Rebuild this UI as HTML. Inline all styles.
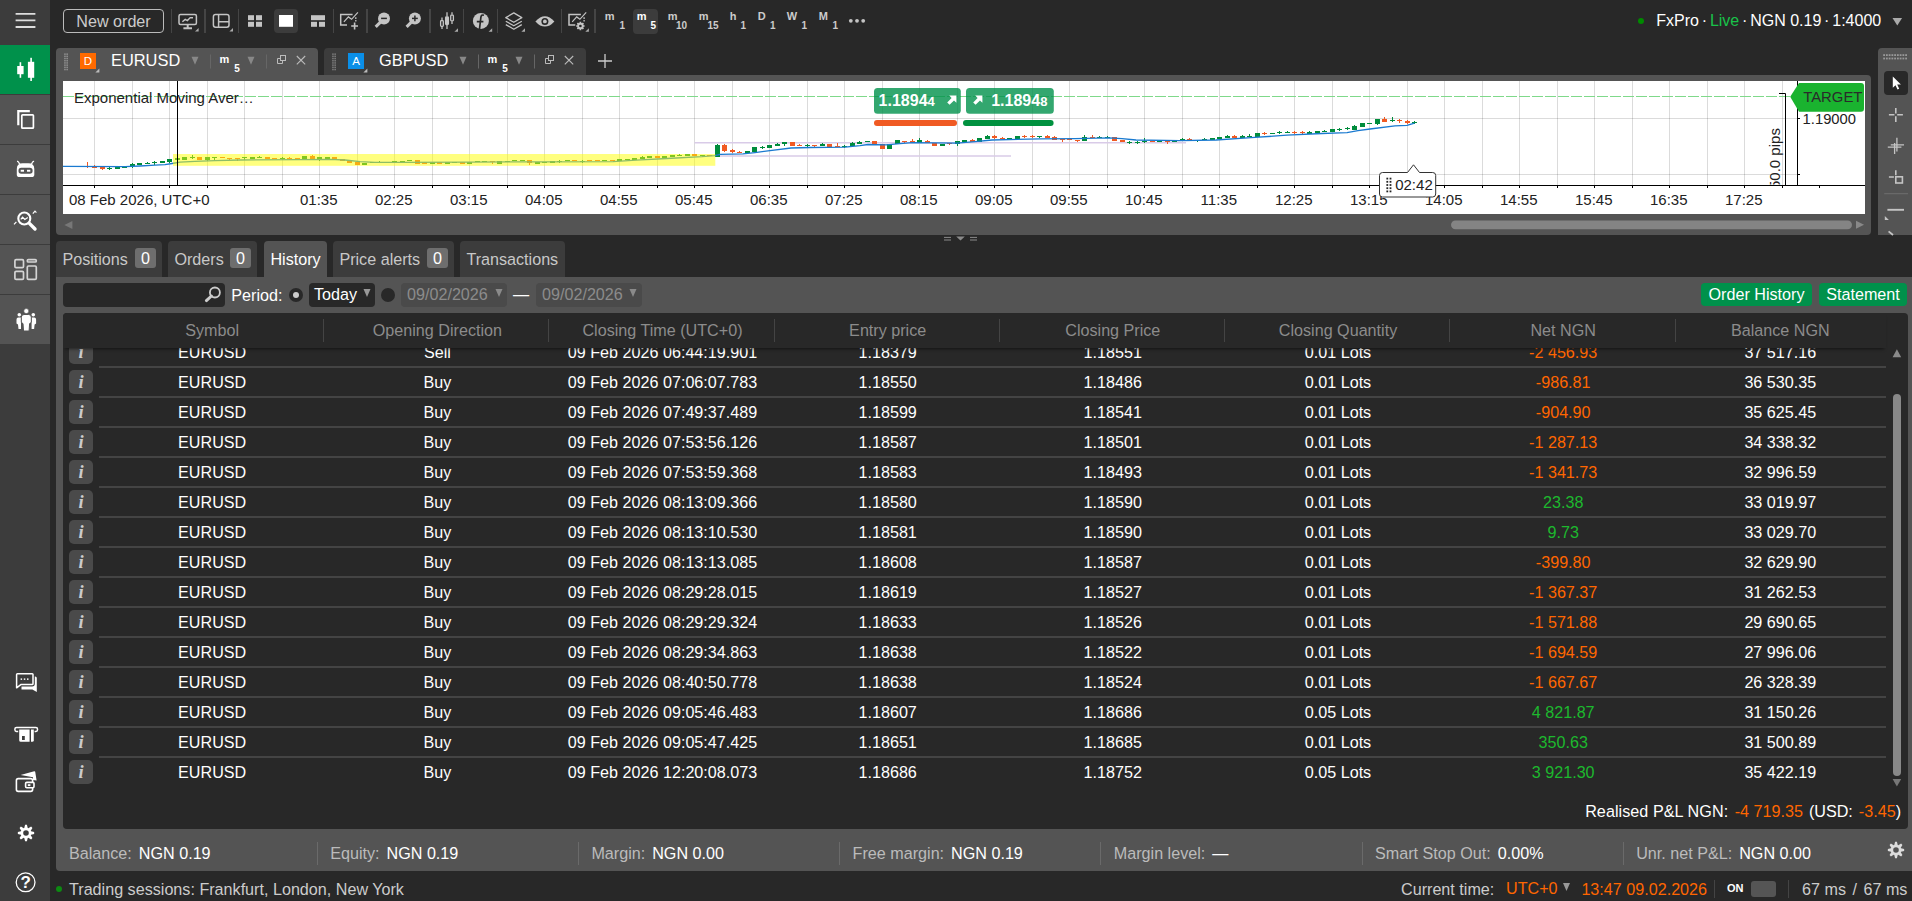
<!DOCTYPE html>
<html><head><meta charset="utf-8"><title>cTrader</title>
<style>
html,body{margin:0;padding:0}
body{width:1912px;height:901px;background:#282828;position:relative;overflow:hidden;font-family:"Liberation Sans",sans-serif;font-size:16.15px;color:#fff;line-height:1}
.abs{position:absolute}
div,span{box-sizing:border-box}
svg{display:block;overflow:visible}
.sb{position:absolute;left:0;width:50px;height:49px;background:#545454}
.vd{position:absolute;width:1px;background:#484848}
.tf{position:absolute;font-weight:bold;font-size:11px;color:#ccc}
.tab{position:absolute;top:241px;height:36px;background:#3c3c3c;border-radius:4px 4px 0 0;color:#c8c8c8;padding:10px 0 0 6.4px;white-space:nowrap}
.badge{position:absolute;top:7px;width:21px;height:20px;border-radius:3px;background:#6e6e6e;color:#fff;text-align:center;padding-top:2px}
.th{position:absolute;top:0;height:35px;color:#8c8c8c;text-align:center;padding-top:9px;white-space:nowrap}
.hd{position:absolute;top:6px;width:1px;height:23px;background:#444}
.row{position:absolute;left:0;width:1823px;height:30px}
.row .sep{position:absolute;left:36px;right:0;bottom:0;height:2px;background:#444}
.row .ib{position:absolute;left:6px;top:2px;width:24px;height:24px;border-radius:5px;background:#4a4a4a;color:#ccc;font-family:"Liberation Serif",serif;font-style:italic;font-weight:bold;font-size:18.5px;text-align:center;padding-top:3px}
.c{position:absolute;top:6px;text-align:center;white-space:nowrap}
.neg{color:#ff6600}.pos{color:#1db82e}
.st{position:absolute;top:0;height:30px;white-space:nowrap;padding-top:7px;color:#bbb}
.st b{font-weight:normal;color:#fff;margin-left:2.5px}
.sd{position:absolute;top:4px;width:1px;height:23px;background:#6a6a6a}
</style></head><body>
<div class="abs" style="left:0;top:0;width:50px;height:901px;background:#3c3c3c"></div><svg class="abs" style="left:15px;top:12px" width="21" height="17"><path d="M0.6 1.9H20.4M0.6 8.4H20.4M0.6 15H20.4" stroke="#ddd" stroke-width="1.8" fill="none"/></svg><div class="sb" style="top:45px;background:#00914b"></div><div class="sb" style="top:95px;background:#545454"></div><div class="sb" style="top:145px;background:#545454"></div><div class="sb" style="top:195px;background:#545454"></div><div class="sb" style="top:245px;background:#545454"></div><div class="sb" style="top:295px;background:#545454"></div><svg class="abs" style="left:0;top:0" width="50" height="901"><g fill="#fff"><rect x="17.2" y="66" width="6.4" height="8.2"/><rect x="19.6" y="62.2" width="1.6" height="15.6"/><rect x="27.9" y="61.8" width="6.3" height="16"/><rect x="30.3" y="57.8" width="1.6" height="23.2"/></g><g fill="none" stroke="#fff" stroke-width="1.7"><path d="M18.3 125.3V111.2H29.8" stroke-width="2.2"/><rect x="21.8" y="114.8" width="11.6" height="13.4" rx="0.8"/></g><g><path d="M16.8 174.4V169Q16.8 163.3 22.6 163.3H28.5Q34.3 163.3 34.3 169V174.4Q34.3 177.1 31.5 177.1H19.6Q16.8 177.1 16.8 174.4Z" fill="#fff"/><path d="M17 161.2Q18.6 161.4 19.8 164.4M34.1 161.2Q32.5 161.4 31.3 164.4" stroke="#fff" stroke-width="1.3" fill="none"/><rect x="18.5" y="167.8" width="14.1" height="6" rx="2.8" fill="#545454"/><rect x="20.7" y="169.8" width="3.3" height="1.9" fill="#fff"/><rect x="27" y="169.8" width="3.3" height="1.9" fill="#fff"/></g><g fill="none" stroke="#fff"><circle cx="24.3" cy="218.5" r="6" stroke-width="2.1"/><path d="M29.4 223.4L35 229" stroke-width="3.4" stroke-linecap="round"/><path d="M20.8 219.4L22.6 217.2L24.8 219.4L27.8 217.4" stroke-width="1.2"/><path d="M14 224.4L16.4 221.8M32.8 213.6L35 211.2L36.4 212.6" stroke-width="1.2"/></g><g fill="none" stroke="#d4d4d4" stroke-width="1.7"><rect x="14.9" y="259.7" width="8.6" height="8" rx="1.2"/><rect x="14.9" y="271.4" width="8.6" height="8" rx="1.2"/><rect x="27.3" y="259.7" width="9" height="2.3" rx="1.1"/><rect x="27.3" y="266" width="9" height="13.4" rx="1.2"/></g><g fill="#fff"><circle cx="19.3" cy="314.7" r="1.8"/><path d="M16.5 319.6Q16.5 317.4 18.4 317.4H21V329H18.5L18 324.4L16.5 323.4Z"/><circle cx="33.3" cy="314.7" r="1.8"/><path d="M36.1 319.6Q36.1 317.4 34.2 317.4H31.6V329H34.1L34.6 324.4L36.1 323.4Z"/><path d="M21.3 317.2Q21.3 314.5 24 314.5H28.6Q31.3 314.5 31.3 317.2V322.4L29.6 323.6L29.1 331H23.5L23 323.6L21.3 322.4Z" stroke="#545454" stroke-width="1"/><circle cx="26.3" cy="311.1" r="2.5" stroke="#545454" stroke-width="0.6"/></g><path d="M21.5 676.4H35.2Q36.8 676.4 36.8 678V692L32.4 689.4H21.5Z" fill="#fff"/><path d="M17.4 673.8H32.2Q33 673.8 33 674.6V683.8Q33 684.6 32.2 684.6H20.8L16.6 687.8V674.6Q16.6 673.8 17.4 673.8Z" fill="#3c3c3c" stroke="#3c3c3c" stroke-width="3.6"/><path d="M17.4 673.8H32.2Q33 673.8 33 674.6V683.8Q33 684.6 32.2 684.6H20.8L16.6 687.8V674.6Q16.6 673.8 17.4 673.8Z" fill="#3c3c3c" stroke="#fff" stroke-width="1.5" stroke-linejoin="round"/><g fill="#fff"><rect x="20.6" y="678.4" width="1.5" height="1.5"/><rect x="23.8" y="678.4" width="1.5" height="1.5"/><rect x="27" y="678.4" width="1.5" height="1.5"/></g><rect x="14.9" y="727.4" width="22.6" height="4" rx="1.6" fill="none" stroke="#fff" stroke-width="1.5"/><rect x="18.2" y="729.4" width="16.4" height="4" fill="#3c3c3c"/><g fill="#fff"><path d="M19.2 729.4H29.6V741.8H20.8Q19.2 741.8 19.2 740.2ZM22 736V740H24.8V736Z" fill-rule="evenodd"/><path d="M31 729.4H33.8V740.2Q33.8 741.8 32.2 741.8H31Z"/></g><path d="M20.6 775L34.2 771.2Q35 771 35.2 771.8L36.6 780.4L33 780V777.2Z" fill="#fff"/><g fill="none" stroke="#fff" stroke-width="1.6" stroke-linejoin="round"><rect x="16.4" y="778.6" width="16.2" height="12.8" rx="1.8" fill="#3c3c3c"/><rect x="25.6" y="782.4" width="8.4" height="5.4" rx="1.2" fill="#3c3c3c"/></g><rect x="27.8" y="784.2" width="2.6" height="1.9" fill="#fff"/></svg><svg class="abs" style="left:16.6px;top:823.5px" width="18" height="18" viewBox="-9 -9 18 18"><path fill="#fff" fill-rule="evenodd" d="M-1.73 -5.01L-0.93 -8.15L0.93 -8.15L1.73 -5.01L2.32 -4.76L5.10 -6.42L6.42 -5.10L4.76 -2.32L5.01 -1.73L8.15 -0.93L8.15 0.93L5.01 1.73L4.76 2.32L6.42 5.10L5.10 6.42L2.32 4.76L1.73 5.01L0.93 8.15L-0.93 8.15L-1.73 5.01L-2.32 4.76L-5.10 6.42L-6.42 5.10L-4.76 2.32L-5.01 1.73L-8.15 0.93L-8.15 -0.93L-5.01 -1.73L-4.76 -2.32L-6.42 -5.10L-5.10 -6.42L-2.32 -4.76ZM2.8 0A2.8 2.8 0 1 0 -2.8 0A2.8 2.8 0 1 0 2.8 0Z"/></svg><svg class="abs" style="left:15px;top:871px" width="22" height="22" viewBox="0 0 22 22"><circle cx="10.6" cy="11.3" r="9.4" fill="none" stroke="#fff" stroke-width="1.3"/><text x="10.7" y="17.4" font-family="Liberation Sans" font-weight="bold" font-size="17" fill="#fff" text-anchor="middle">?</text></svg><div class="abs" style="left:63px;top:9px;width:101px;height:24px;border:1px solid #bbb;border-radius:4px;color:#ccc;text-align:center;padding-top:3px">New order</div><div class="vd" style="left:171px;top:9px;height:24px;width:1px;background:#454545"></div><div class="vd" style="left:204px;top:9px;height:24px;width:2px;background:#454545"></div><div class="vd" style="left:238px;top:9px;height:24px;width:1px;background:#454545"></div><div class="vd" style="left:333px;top:9px;height:24px;width:1px;background:#454545"></div><div class="vd" style="left:366px;top:9px;height:24px;width:2px;background:#454545"></div><div class="vd" style="left:429px;top:9px;height:24px;width:2px;background:#454545"></div><div class="vd" style="left:463px;top:9px;height:24px;width:1px;background:#454545"></div><div class="vd" style="left:497px;top:9px;height:24px;width:1px;background:#454545"></div><div class="vd" style="left:561px;top:9px;height:24px;width:1px;background:#454545"></div><div class="vd" style="left:594px;top:9px;height:24px;width:2px;background:#454545"></div><div class="abs" style="left:274px;top:9px;width:24px;height:24px;border-radius:4px;background:#3c3c3c"></div><div class="abs" style="left:633px;top:9px;width:25px;height:25px;border-radius:4px;background:#3c3c3c"></div><svg class="abs" style="left:0;top:0" width="900" height="42"><g fill="none" stroke="#c4c4c4" stroke-width="1.5"><rect x="179" y="14.6" width="17.4" height="10" rx="1.5"/><path d="M187.7 24.6V27.6M183.4 28.2H192" stroke-width="2"/><path d="M182.4 21.8L185.2 19.4L187.4 20.6L190.2 17.6L193 17.8" stroke-width="1.4"/></g><polygon points="195,31.6 198.6,31.6 198.6,28.0" fill="#aaa"/><g fill="none" stroke="#c4c4c4" stroke-width="1.5"><rect x="213.4" y="14.6" width="15.6" height="12.6" rx="2.2"/><path d="M218.6 14.6V27.2M218.6 21.8H229" /></g><polygon points="229.4,31.6 233.0,31.6 233.0,28.0" fill="#aaa"/><g fill="#c4c4c4"><rect x="248" y="15.2" width="6" height="5"/><rect x="256" y="15.2" width="6" height="5"/><rect x="248" y="21.8" width="6" height="5"/><rect x="256" y="21.8" width="6" height="5"/></g><rect x="279" y="15" width="14" height="11.8" fill="#fff"/><g fill="#c4c4c4"><rect x="311" y="15.2" width="14" height="5"/><rect x="311" y="21.8" width="6" height="5"/><rect x="319" y="21.8" width="6" height="5"/></g><g fill="none" stroke="#c4c4c4" stroke-width="1.5"><path d="M352.6 14.6H340.7V25H347"/><path d="M343.9 21.8L348.4 16.9L351.6 19.3L357.9 12.4" stroke-width="1.2"/><path d="M355.8 17.2V21.6" stroke-width="1.3" stroke-dasharray="1.7 1"/></g><path d="M354.6 22.6V29.4M351.2 26H358" stroke="#c4c4c4" stroke-width="1.6"/><path d="M382 20.6L375.7 26.9" stroke="#c4c4c4" stroke-width="3" fill="none"/><circle cx="384" cy="18.55" r="6" fill="#c4c4c4"/><path d="M381.1 18.4H386.9" stroke="#282828" stroke-width="1.5"/><path d="M412.9 20.6L406.59999999999997 26.9" stroke="#c4c4c4" stroke-width="3" fill="none"/><circle cx="414.9" cy="18.55" r="6" fill="#c4c4c4"/><path d="M412.0 18.4H417.79999999999995" stroke="#282828" stroke-width="1.5"/><path d="M414.9 15.5V21.3" stroke="#282828" stroke-width="1.5"/><g fill="none" stroke="#c4c4c4" stroke-width="1.3"><rect x="440.6" y="20.6" width="2.7" height="5.8" rx="0.8"/><path d="M442 17.4V20M442 26.6V29M447 12.3V16.5M447 24.8V29M452 12.3V14.8M452 21.2V24"/><rect x="445.6" y="16.9" width="2.8" height="7.6" rx="0.8" fill="#c4c4c4"/><rect x="450.7" y="15.2" width="2.7" height="5.6" rx="0.8"/></g><polygon points="454.4,31.8 458.0,31.8 458.0,28.2" fill="#aaa"/><circle cx="480.9" cy="20.9" r="8" fill="#c4c4c4"/><path d="M484 15.3Q481.3 14.2 480.9 17.2L479.5 29M476.8 21.7H483.4" stroke="#282828" stroke-width="1.7" fill="none"/><polygon points="488.6,31.8 492.20000000000005,31.8 492.20000000000005,28.2" fill="#aaa"/><g fill="none" stroke="#c4c4c4" stroke-width="1.3" stroke-linejoin="round"><path d="M513.8 12.9L521.8 17.6L513.8 22.3L505.8 17.6Z"/><path d="M505.8 21.2L513.8 25.8L521.8 21.2M505.8 24.6L513.8 29.2L521.8 24.6"/></g><polygon points="521.4,31.8 525.0,31.8 525.0,28.2" fill="#aaa"/><path d="M535.4 21.4Q544.9 11 554.4 21.4Q544.9 31.8 535.4 21.4Z" fill="#c4c4c4"/><circle cx="544.9" cy="21.4" r="3.5" fill="#282828"/><circle cx="544.9" cy="21.4" r="1.9" fill="#c4c4c4"/><g fill="none" stroke="#c4c4c4" stroke-width="1.5"><path d="M580.9 14.6H569.0V25H575.3"/><path d="M572.1999999999999 21.8L576.6999999999999 16.9L579.9 19.3L586.1999999999999 12.4" stroke-width="1.2"/><path d="M584.0999999999999 17.2V21.6" stroke-width="1.3" stroke-dasharray="1.7 1"/></g><circle cx="580.4" cy="26" r="4.6" fill="#282828"/><g fill="none" stroke="#c4c4c4"><circle cx="580.4" cy="26" r="2.3" stroke-width="1.9"/><path d="M580.4 21.8V23.4M580.4 28.6V30.2M576.2 26H577.8M583 26H584.6M577.4 23L578.6 24.2M582.2 27.8L583.4 29M577.4 29L578.6 27.8M582.2 24.2L583.4 23" stroke-width="1.7"/></g><polygon points="585.3,31.8 588.9,31.8 588.9,28.2" fill="#aaa"/><g fill="#c4c4c4"><circle cx="850.8" cy="20.8" r="1.9"/><circle cx="857" cy="20.8" r="1.9"/><circle cx="863.2" cy="20.8" r="1.9"/></g></svg><div class="tf" style="left:604.7px;top:11px;color:#ccc">m</div><div class="tf" style="left:619.4px;top:21.3px;font-size:10px;color:#ccc">1</div><div class="tf" style="left:636.7px;top:11px;color:#fff">m</div><div class="tf" style="left:650.4px;top:21.3px;font-size:10px;color:#fff">5</div><div class="tf" style="left:667.7px;top:11px;color:#ccc">m</div><div class="tf" style="left:675.9px;top:21.3px;font-size:10px;color:#ccc">10</div><div class="tf" style="left:698.7px;top:11px;color:#ccc">m</div><div class="tf" style="left:707.4px;top:21.3px;font-size:10px;color:#ccc">15</div><div class="tf" style="left:729.7px;top:11px;color:#ccc">h</div><div class="tf" style="left:740.4px;top:21.3px;font-size:10px;color:#ccc">1</div><div class="tf" style="left:757.7px;top:11px;color:#ccc">D</div><div class="tf" style="left:769.9px;top:21.3px;font-size:10px;color:#ccc">1</div><div class="tf" style="left:786.7px;top:11px;color:#ccc">W</div><div class="tf" style="left:801.4px;top:21.3px;font-size:10px;color:#ccc">1</div><div class="tf" style="left:818.7px;top:11px;color:#ccc">M</div><div class="tf" style="left:832.4px;top:21.3px;font-size:10px;color:#ccc">1</div><div class="abs" style="left:1638px;top:17.6px;width:6.4px;height:6.4px;border-radius:3.2px;background:#008a00"></div><div class="abs" style="left:1656.3px;top:13px;white-space:nowrap;color:#fff;font-size:16px">FxPro<span style="margin:0 2.8px">·</span><span style="color:#19c24a">Live</span><span style="margin:0 2.8px">·</span>NGN 0.19<span style="margin:0 2.8px">·</span>1:4000</div><svg class="abs" style="left:1880px;top:10px" width="30" height="22"><polygon points="12.5,8.0 22.1,8.0 17.3,15.600000000000001" fill="#aaa"/></svg><div class="abs" style="left:56px;top:48px;width:262px;height:28px;background:#545454;border-radius:4px 4px 0 0"></div><svg class="abs" style="left:56px;top:48px" width="262" height="28"><rect x="8.2" y="5.4" width="1.5" height="1.5" fill="#929292"/><rect x="10.4" y="5.4" width="1.5" height="1.5" fill="#929292"/><rect x="8.2" y="7.6" width="1.5" height="1.5" fill="#929292"/><rect x="10.4" y="7.6" width="1.5" height="1.5" fill="#929292"/><rect x="8.2" y="9.8" width="1.5" height="1.5" fill="#929292"/><rect x="10.4" y="9.8" width="1.5" height="1.5" fill="#929292"/><rect x="8.2" y="12.0" width="1.5" height="1.5" fill="#929292"/><rect x="10.4" y="12.0" width="1.5" height="1.5" fill="#929292"/><rect x="8.2" y="14.2" width="1.5" height="1.5" fill="#929292"/><rect x="10.4" y="14.2" width="1.5" height="1.5" fill="#929292"/><rect x="8.2" y="16.4" width="1.5" height="1.5" fill="#929292"/><rect x="10.4" y="16.4" width="1.5" height="1.5" fill="#929292"/><rect x="8.2" y="18.6" width="1.5" height="1.5" fill="#929292"/><rect x="10.4" y="18.6" width="1.5" height="1.5" fill="#929292"/><rect x="8.2" y="20.8" width="1.5" height="1.5" fill="#929292"/><rect x="10.4" y="20.8" width="1.5" height="1.5" fill="#929292"/><rect x="24" y="5" width="16" height="16" fill="#ff6a00"/><polygon points="39.4,24.4 43.4,24.4 43.4,20.4" fill="#bbb"/><text x="32" y="17.4" font-size="11.5" fill="#fff" text-anchor="middle" font-family="Liberation Sans">D</text><polygon points="135.5,8.8 142.5,8.8 139,16.8" fill="#888"/><polygon points="191.5,8.8 198.5,8.8 195,16.8" fill="#888"/><path d="M154.5 6.5V20.5M210.5 6.5V20.5" stroke="#666" stroke-width="1"/><g fill="none" stroke="#bbb" stroke-width="1"><rect x="224.5" y="7.5" width="5" height="5"/><path d="M224.5 10.5H221.5V15.5H226.5V12.5"/><path d="M240.8 8L249.2 16.4M249.2 8L240.8 16.4" stroke-width="1.1"/></g></svg><div class="abs" style="left:111px;top:52px;font-size:16.4px;color:#fff">EURUSD</div><div class="tf" style="left:219.5px;top:54px;color:#fff">m</div><div class="tf" style="left:234.2px;top:63.8px;font-size:10px;color:#fff">5</div><div class="abs" style="left:324px;top:48px;width:262px;height:27px;background:#3c3c3c;border-radius:4px 4px 0 0"></div><svg class="abs" style="left:324px;top:48px" width="262" height="28"><rect x="8.2" y="5.4" width="1.5" height="1.5" fill="#7e7e7e"/><rect x="10.4" y="5.4" width="1.5" height="1.5" fill="#7e7e7e"/><rect x="8.2" y="7.6" width="1.5" height="1.5" fill="#7e7e7e"/><rect x="10.4" y="7.6" width="1.5" height="1.5" fill="#7e7e7e"/><rect x="8.2" y="9.8" width="1.5" height="1.5" fill="#7e7e7e"/><rect x="10.4" y="9.8" width="1.5" height="1.5" fill="#7e7e7e"/><rect x="8.2" y="12.0" width="1.5" height="1.5" fill="#7e7e7e"/><rect x="10.4" y="12.0" width="1.5" height="1.5" fill="#7e7e7e"/><rect x="8.2" y="14.2" width="1.5" height="1.5" fill="#7e7e7e"/><rect x="10.4" y="14.2" width="1.5" height="1.5" fill="#7e7e7e"/><rect x="8.2" y="16.4" width="1.5" height="1.5" fill="#7e7e7e"/><rect x="10.4" y="16.4" width="1.5" height="1.5" fill="#7e7e7e"/><rect x="8.2" y="18.6" width="1.5" height="1.5" fill="#7e7e7e"/><rect x="10.4" y="18.6" width="1.5" height="1.5" fill="#7e7e7e"/><rect x="8.2" y="20.8" width="1.5" height="1.5" fill="#7e7e7e"/><rect x="10.4" y="20.8" width="1.5" height="1.5" fill="#7e7e7e"/><rect x="24" y="5" width="16" height="16" fill="#0a8fe8"/><polygon points="39.4,24.4 43.4,24.4 43.4,20.4" fill="#bbb"/><text x="32" y="17.4" font-size="11.5" fill="#fff" text-anchor="middle" font-family="Liberation Sans">A</text><polygon points="135.5,8.8 142.5,8.8 139,16.8" fill="#888"/><polygon points="191.5,8.8 198.5,8.8 195,16.8" fill="#888"/><path d="M154.5 6.5V20.5M210.5 6.5V20.5" stroke="#666" stroke-width="1"/><g fill="none" stroke="#bbb" stroke-width="1"><rect x="224.5" y="7.5" width="5" height="5"/><path d="M224.5 10.5H221.5V15.5H226.5V12.5"/><path d="M240.8 8L249.2 16.4M249.2 8L240.8 16.4" stroke-width="1.1"/></g></svg><div class="abs" style="left:379px;top:52px;font-size:16.4px;color:#fff">GBPUSD</div><div class="tf" style="left:487.5px;top:54px;color:#fff">m</div><div class="tf" style="left:502.2px;top:63.8px;font-size:10px;color:#fff">5</div><svg class="abs" style="left:597px;top:53px" width="16" height="16"><path d="M8 1V15M1 8H15" stroke="#ccc" stroke-width="1.3"/></svg><div class="abs" style="left:56px;top:75px;width:1815px;height:160px;background:#545454;border-radius:0 4px 4px 4px"></div><svg class="abs" style="left:63px;top:81px;background:#fff" width="1802" height="133" viewBox="63 81 1802 133"><path d="M94.5 81V185M132.5 81V185M169.5 81V185M207.5 81V185M244.5 81V185M282.5 81V185M319.5 81V185M357.5 81V185M394.5 81V185M432.5 81V185M469.5 81V185M507.5 81V185M544.5 81V185M582.5 81V185M619.5 81V185M657.5 81V185M694.5 81V185M732.5 81V185M769.5 81V185M807.5 81V185M844.5 81V185M882.5 81V185M919.5 81V185M957.5 81V185M994.5 81V185M1032.5 81V185M1069.5 81V185M1107.5 81V185M1144.5 81V185M1182.5 81V185M1219.5 81V185M1257.5 81V185M1294.5 81V185M1332.5 81V185M1369.5 81V185M1407.5 81V185M1444.5 81V185M1482.5 81V185M1519.5 81V185M1557.5 81V185M1594.5 81V185M1632.5 81V185M1669.5 81V185M1707.5 81V185M1744.5 81V185M1782.5 81V185" stroke="#000" stroke-opacity="0.14" stroke-width="1" fill="none"/><path d="M63 118.5H1797M63 174.5H1797" stroke="#000" stroke-opacity="0.14" stroke-width="1" fill="none"/><path d="M694.5 142.7H1186M717 156H1011" stroke="#d9cbe8" stroke-width="1.6" fill="none"/><path d="M63 96.5H1791" stroke="#7fd98a" stroke-width="1" stroke-dasharray="11 2" fill="none"/><rect x="87" y="162" width="1" height="6" fill="#f05a23"/><rect x="92" y="166" width="5" height="2" fill="#f05a23"/><rect x="94" y="165" width="1" height="3" fill="#f05a23"/><rect x="100" y="167" width="5" height="2" fill="#f05a23"/><rect x="102" y="166" width="1" height="4" fill="#f05a23"/><rect x="107" y="168" width="5" height="1" fill="#008c3c"/><rect x="109" y="167" width="1" height="3" fill="#008c3c"/><rect x="115" y="167" width="5" height="2" fill="#008c3c"/><rect x="122" y="166" width="5" height="2" fill="#008c3c"/><rect x="130" y="164" width="5" height="2" fill="#008c3c"/><rect x="132" y="163" width="1" height="5" fill="#008c3c"/><rect x="137" y="163" width="5" height="2" fill="#008c3c"/><rect x="145" y="163" width="5" height="1" fill="#008c3c"/><rect x="147" y="162" width="1" height="2" fill="#008c3c"/><rect x="152" y="162" width="5" height="1" fill="#008c3c"/><rect x="154" y="161" width="1" height="4" fill="#008c3c"/><rect x="160" y="161" width="5" height="2" fill="#008c3c"/><rect x="167" y="159" width="5" height="3" fill="#008c3c"/><rect x="169" y="159" width="1" height="4" fill="#008c3c"/><rect x="175" y="158" width="5" height="2" fill="#008c3c"/><rect x="177" y="156" width="1" height="5" fill="#008c3c"/><rect x="182" y="157" width="5" height="3" fill="#008c3c"/><rect x="190" y="157" width="5" height="1" fill="#008c3c"/><rect x="192" y="155" width="1" height="4" fill="#008c3c"/><rect x="197" y="157" width="5" height="3" fill="#f05a23"/><rect x="205" y="157" width="5" height="3" fill="#008c3c"/><rect x="207" y="157" width="1" height="4" fill="#008c3c"/><rect x="212" y="157" width="5" height="1" fill="#008c3c"/><rect x="214" y="157" width="1" height="3" fill="#008c3c"/><rect x="220" y="157" width="5" height="1" fill="#f05a23"/><rect x="227" y="158" width="5" height="1" fill="#f05a23"/><rect x="229" y="158" width="1" height="2" fill="#f05a23"/><rect x="235" y="158" width="5" height="1" fill="#f05a23"/><rect x="237" y="158" width="1" height="3" fill="#f05a23"/><rect x="242" y="157" width="5" height="1" fill="#008c3c"/><rect x="244" y="157" width="1" height="3" fill="#008c3c"/><rect x="250" y="157" width="5" height="2" fill="#008c3c"/><rect x="257" y="157" width="5" height="1" fill="#008c3c"/><rect x="259" y="156" width="1" height="2" fill="#008c3c"/><rect x="265" y="157" width="5" height="2" fill="#f05a23"/><rect x="272" y="158" width="5" height="1" fill="#f05a23"/><rect x="280" y="158" width="5" height="1" fill="#008c3c"/><rect x="282" y="157" width="1" height="3" fill="#008c3c"/><rect x="287" y="158" width="5" height="1" fill="#f05a23"/><rect x="289" y="157" width="1" height="3" fill="#f05a23"/><rect x="295" y="158" width="5" height="1" fill="#f05a23"/><rect x="297" y="158" width="1" height="2" fill="#f05a23"/><rect x="302" y="156" width="5" height="3" fill="#008c3c"/><rect x="310" y="156" width="5" height="4" fill="#f05a23"/><rect x="312" y="155" width="1" height="5" fill="#f05a23"/><rect x="317" y="157" width="5" height="3" fill="#008c3c"/><rect x="319" y="157" width="1" height="4" fill="#008c3c"/><rect x="325" y="157" width="5" height="2" fill="#008c3c"/><rect x="327" y="157" width="1" height="3" fill="#008c3c"/><rect x="332" y="157" width="5" height="2" fill="#f05a23"/><rect x="340" y="159" width="5" height="2" fill="#f05a23"/><rect x="347" y="160" width="5" height="3" fill="#f05a23"/><rect x="355" y="162" width="5" height="3" fill="#f05a23"/><rect x="362" y="163" width="5" height="2" fill="#008c3c"/><rect x="370" y="162" width="5" height="1" fill="#008c3c"/><rect x="377" y="162" width="5" height="1" fill="#008c3c"/><rect x="379" y="161" width="1" height="2" fill="#008c3c"/><rect x="385" y="162" width="5" height="1" fill="#008c3c"/><rect x="392" y="161" width="5" height="1" fill="#008c3c"/><rect x="400" y="161" width="5" height="2" fill="#008c3c"/><rect x="407" y="160" width="5" height="1" fill="#008c3c"/><rect x="415" y="160" width="5" height="4" fill="#f05a23"/><rect x="422" y="162" width="5" height="2" fill="#f05a23"/><rect x="430" y="162" width="5" height="2" fill="#008c3c"/><rect x="437" y="162" width="5" height="2" fill="#f05a23"/><rect x="445" y="162" width="5" height="2" fill="#008c3c"/><rect x="452" y="162" width="5" height="1" fill="#008c3c"/><rect x="460" y="162" width="5" height="2" fill="#f05a23"/><rect x="467" y="162" width="5" height="2" fill="#008c3c"/><rect x="475" y="161" width="5" height="1" fill="#008c3c"/><rect x="482" y="161" width="5" height="1" fill="#008c3c"/><rect x="490" y="161" width="5" height="1" fill="#f05a23"/><rect x="492" y="161" width="1" height="3" fill="#f05a23"/><rect x="497" y="161" width="5" height="3" fill="#008c3c"/><rect x="505" y="161" width="5" height="1" fill="#008c3c"/><rect x="512" y="160" width="5" height="1" fill="#008c3c"/><rect x="520" y="160" width="5" height="1" fill="#008c3c"/><rect x="527" y="160" width="5" height="3" fill="#f05a23"/><rect x="529" y="160" width="1" height="5" fill="#f05a23"/><rect x="535" y="162" width="5" height="2" fill="#008c3c"/><rect x="542" y="162" width="5" height="1" fill="#008c3c"/><rect x="550" y="161" width="5" height="2" fill="#008c3c"/><rect x="557" y="161" width="5" height="1" fill="#008c3c"/><rect x="559" y="160" width="1" height="3" fill="#008c3c"/><rect x="565" y="160" width="5" height="1" fill="#008c3c"/><rect x="572" y="160" width="5" height="1" fill="#f05a23"/><rect x="580" y="161" width="5" height="1" fill="#008c3c"/><rect x="582" y="160" width="1" height="3" fill="#008c3c"/><rect x="587" y="160" width="5" height="1" fill="#f05a23"/><rect x="595" y="160" width="5" height="1" fill="#f05a23"/><rect x="602" y="160" width="5" height="1" fill="#008c3c"/><rect x="610" y="160" width="5" height="1" fill="#f05a23"/><rect x="617" y="159" width="5" height="2" fill="#008c3c"/><rect x="625" y="159" width="5" height="1" fill="#008c3c"/><rect x="632" y="158" width="5" height="2" fill="#008c3c"/><rect x="640" y="157" width="5" height="2" fill="#008c3c"/><rect x="642" y="156" width="1" height="3" fill="#008c3c"/><rect x="647" y="156" width="5" height="2" fill="#008c3c"/><rect x="655" y="156" width="5" height="2" fill="#f05a23"/><rect x="662" y="156" width="5" height="2" fill="#008c3c"/><rect x="670" y="155" width="5" height="2" fill="#008c3c"/><rect x="677" y="155" width="5" height="1" fill="#008c3c"/><rect x="679" y="154" width="1" height="2" fill="#008c3c"/><rect x="685" y="154" width="5" height="2" fill="#008c3c"/><rect x="692" y="154" width="5" height="2" fill="#f05a23"/><rect x="700" y="155" width="5" height="1" fill="#008c3c"/><rect x="707" y="155" width="5" height="1" fill="#f05a23"/><rect x="715" y="145" width="5" height="12" fill="#008c3c"/><rect x="717" y="144" width="1" height="13" fill="#008c3c"/><rect x="722" y="145" width="5" height="6" fill="#f05a23"/><rect x="724" y="144" width="1" height="8" fill="#f05a23"/><rect x="730" y="150" width="5" height="2" fill="#f05a23"/><rect x="732" y="149" width="1" height="4" fill="#f05a23"/><rect x="737" y="152" width="5" height="1" fill="#f05a23"/><rect x="739" y="151" width="1" height="2" fill="#f05a23"/><rect x="745" y="151" width="5" height="2" fill="#008c3c"/><rect x="752" y="147" width="5" height="5" fill="#008c3c"/><rect x="760" y="147" width="5" height="1" fill="#008c3c"/><rect x="762" y="146" width="1" height="3" fill="#008c3c"/><rect x="767" y="145" width="5" height="3" fill="#008c3c"/><rect x="775" y="144" width="5" height="2" fill="#008c3c"/><rect x="777" y="143" width="1" height="3" fill="#008c3c"/><rect x="782" y="142" width="5" height="2" fill="#008c3c"/><rect x="784" y="142" width="1" height="4" fill="#008c3c"/><rect x="790" y="142" width="5" height="4" fill="#f05a23"/><rect x="797" y="145" width="5" height="1" fill="#f05a23"/><rect x="799" y="144" width="1" height="2" fill="#f05a23"/><rect x="805" y="145" width="5" height="1" fill="#008c3c"/><rect x="807" y="144" width="1" height="3" fill="#008c3c"/><rect x="812" y="145" width="5" height="1" fill="#f05a23"/><rect x="814" y="145" width="1" height="2" fill="#f05a23"/><rect x="820" y="144" width="5" height="2" fill="#008c3c"/><rect x="822" y="143" width="1" height="3" fill="#008c3c"/><rect x="827" y="144" width="5" height="3" fill="#f05a23"/><rect x="835" y="146" width="5" height="1" fill="#f05a23"/><rect x="837" y="143" width="1" height="4" fill="#f05a23"/><rect x="842" y="146" width="5" height="1" fill="#008c3c"/><rect x="844" y="145" width="1" height="3" fill="#008c3c"/><rect x="850" y="143" width="5" height="3" fill="#008c3c"/><rect x="852" y="142" width="1" height="5" fill="#008c3c"/><rect x="857" y="142" width="5" height="2" fill="#008c3c"/><rect x="859" y="141" width="1" height="3" fill="#008c3c"/><rect x="865" y="141" width="5" height="1" fill="#008c3c"/><rect x="872" y="141" width="5" height="3" fill="#f05a23"/><rect x="874" y="141" width="1" height="4" fill="#f05a23"/><rect x="880" y="144" width="5" height="5" fill="#f05a23"/><rect x="887" y="144" width="5" height="5" fill="#008c3c"/><rect x="895" y="140" width="5" height="4" fill="#008c3c"/><rect x="902" y="141" width="5" height="1" fill="#f05a23"/><rect x="904" y="141" width="1" height="2" fill="#f05a23"/><rect x="910" y="141" width="5" height="2" fill="#f05a23"/><rect x="912" y="139" width="1" height="4" fill="#f05a23"/><rect x="917" y="140" width="5" height="3" fill="#008c3c"/><rect x="919" y="138" width="1" height="5" fill="#008c3c"/><rect x="925" y="141" width="5" height="2" fill="#f05a23"/><rect x="927" y="140" width="1" height="3" fill="#f05a23"/><rect x="932" y="143" width="5" height="3" fill="#f05a23"/><rect x="940" y="144" width="5" height="2" fill="#008c3c"/><rect x="947" y="143" width="5" height="1" fill="#f05a23"/><rect x="949" y="143" width="1" height="2" fill="#f05a23"/><rect x="955" y="141" width="5" height="3" fill="#008c3c"/><rect x="957" y="141" width="1" height="5" fill="#008c3c"/><rect x="962" y="140" width="5" height="2" fill="#008c3c"/><rect x="964" y="140" width="1" height="3" fill="#008c3c"/><rect x="970" y="140" width="5" height="2" fill="#f05a23"/><rect x="972" y="139" width="1" height="3" fill="#f05a23"/><rect x="977" y="138" width="5" height="4" fill="#008c3c"/><rect x="985" y="136" width="5" height="3" fill="#008c3c"/><rect x="987" y="135" width="1" height="4" fill="#008c3c"/><rect x="992" y="136" width="5" height="2" fill="#f05a23"/><rect x="994" y="135" width="1" height="4" fill="#f05a23"/><rect x="1000" y="138" width="5" height="1" fill="#f05a23"/><rect x="1002" y="137" width="1" height="2" fill="#f05a23"/><rect x="1007" y="138" width="5" height="1" fill="#008c3c"/><rect x="1009" y="138" width="1" height="2" fill="#008c3c"/><rect x="1015" y="136" width="5" height="3" fill="#008c3c"/><rect x="1022" y="136" width="5" height="1" fill="#f05a23"/><rect x="1024" y="135" width="1" height="3" fill="#f05a23"/><rect x="1030" y="136" width="5" height="1" fill="#f05a23"/><rect x="1032" y="135" width="1" height="3" fill="#f05a23"/><rect x="1037" y="136" width="5" height="1" fill="#008c3c"/><rect x="1039" y="136" width="1" height="2" fill="#008c3c"/><rect x="1045" y="136" width="5" height="2" fill="#f05a23"/><rect x="1047" y="135" width="1" height="3" fill="#f05a23"/><rect x="1052" y="137" width="5" height="3" fill="#f05a23"/><rect x="1054" y="136" width="1" height="4" fill="#f05a23"/><rect x="1060" y="139" width="5" height="1" fill="#f05a23"/><rect x="1062" y="139" width="1" height="3" fill="#f05a23"/><rect x="1067" y="139" width="5" height="1" fill="#f05a23"/><rect x="1069" y="138" width="1" height="2" fill="#f05a23"/><rect x="1075" y="140" width="5" height="1" fill="#f05a23"/><rect x="1077" y="140" width="1" height="2" fill="#f05a23"/><rect x="1082" y="137" width="5" height="4" fill="#008c3c"/><rect x="1084" y="135" width="1" height="6" fill="#008c3c"/><rect x="1090" y="137" width="5" height="1" fill="#f05a23"/><rect x="1092" y="135" width="1" height="3" fill="#f05a23"/><rect x="1097" y="137" width="5" height="1" fill="#008c3c"/><rect x="1099" y="136" width="1" height="2" fill="#008c3c"/><rect x="1105" y="137" width="5" height="1" fill="#008c3c"/><rect x="1107" y="136" width="1" height="2" fill="#008c3c"/><rect x="1112" y="137" width="5" height="4" fill="#f05a23"/><rect x="1120" y="140" width="5" height="2" fill="#f05a23"/><rect x="1127" y="142" width="5" height="1" fill="#008c3c"/><rect x="1129" y="141" width="1" height="3" fill="#008c3c"/><rect x="1135" y="142" width="5" height="1" fill="#008c3c"/><rect x="1137" y="141" width="1" height="3" fill="#008c3c"/><rect x="1142" y="141" width="5" height="1" fill="#008c3c"/><rect x="1144" y="138" width="1" height="5" fill="#008c3c"/><rect x="1150" y="141" width="5" height="1" fill="#f05a23"/><rect x="1157" y="141" width="5" height="1" fill="#008c3c"/><rect x="1165" y="141" width="5" height="1" fill="#f05a23"/><rect x="1167" y="141" width="1" height="3" fill="#f05a23"/><rect x="1172" y="140" width="5" height="2" fill="#008c3c"/><rect x="1180" y="139" width="5" height="2" fill="#008c3c"/><rect x="1182" y="138" width="1" height="3" fill="#008c3c"/><rect x="1187" y="139" width="5" height="1" fill="#f05a23"/><rect x="1189" y="138" width="1" height="2" fill="#f05a23"/><rect x="1195" y="140" width="5" height="1" fill="#008c3c"/><rect x="1197" y="140" width="1" height="2" fill="#008c3c"/><rect x="1202" y="139" width="5" height="1" fill="#008c3c"/><rect x="1204" y="138" width="1" height="2" fill="#008c3c"/><rect x="1210" y="138" width="5" height="2" fill="#008c3c"/><rect x="1217" y="137" width="5" height="2" fill="#008c3c"/><rect x="1225" y="136" width="5" height="2" fill="#008c3c"/><rect x="1227" y="135" width="1" height="3" fill="#008c3c"/><rect x="1232" y="136" width="5" height="2" fill="#f05a23"/><rect x="1234" y="135" width="1" height="3" fill="#f05a23"/><rect x="1240" y="136" width="5" height="2" fill="#008c3c"/><rect x="1242" y="135" width="1" height="3" fill="#008c3c"/><rect x="1247" y="136" width="5" height="1" fill="#008c3c"/><rect x="1249" y="134" width="1" height="3" fill="#008c3c"/><rect x="1255" y="133" width="5" height="4" fill="#008c3c"/><rect x="1262" y="133" width="5" height="1" fill="#f05a23"/><rect x="1264" y="132" width="1" height="3" fill="#f05a23"/><rect x="1270" y="133" width="5" height="1" fill="#008c3c"/><rect x="1277" y="132" width="5" height="1" fill="#008c3c"/><rect x="1279" y="131" width="1" height="3" fill="#008c3c"/><rect x="1285" y="132" width="5" height="1" fill="#008c3c"/><rect x="1287" y="131" width="1" height="2" fill="#008c3c"/><rect x="1292" y="132" width="5" height="1" fill="#f05a23"/><rect x="1294" y="131" width="1" height="3" fill="#f05a23"/><rect x="1300" y="132" width="5" height="1" fill="#f05a23"/><rect x="1302" y="131" width="1" height="3" fill="#f05a23"/><rect x="1307" y="132" width="5" height="2" fill="#008c3c"/><rect x="1309" y="131" width="1" height="3" fill="#008c3c"/><rect x="1315" y="131" width="5" height="2" fill="#008c3c"/><rect x="1322" y="131" width="5" height="1" fill="#008c3c"/><rect x="1324" y="130" width="1" height="2" fill="#008c3c"/><rect x="1330" y="129" width="5" height="3" fill="#008c3c"/><rect x="1337" y="129" width="5" height="1" fill="#008c3c"/><rect x="1339" y="128" width="1" height="3" fill="#008c3c"/><rect x="1345" y="128" width="5" height="1" fill="#008c3c"/><rect x="1347" y="127" width="1" height="3" fill="#008c3c"/><rect x="1352" y="126" width="5" height="4" fill="#008c3c"/><rect x="1354" y="125" width="1" height="5" fill="#008c3c"/><rect x="1360" y="123" width="5" height="4" fill="#008c3c"/><rect x="1367" y="123" width="5" height="1" fill="#008c3c"/><rect x="1375" y="119" width="5" height="5" fill="#008c3c"/><rect x="1377" y="119" width="1" height="6" fill="#008c3c"/><rect x="1382" y="119" width="5" height="3" fill="#f05a23"/><rect x="1384" y="117" width="1" height="5" fill="#f05a23"/><rect x="1390" y="120" width="5" height="1" fill="#008c3c"/><rect x="1392" y="117" width="1" height="5" fill="#008c3c"/><rect x="1397" y="120" width="5" height="1" fill="#f05a23"/><rect x="1399" y="119" width="1" height="4" fill="#f05a23"/><rect x="1405" y="121" width="5" height="2" fill="#f05a23"/><rect x="1407" y="120" width="1" height="4" fill="#f05a23"/><rect x="1412" y="122" width="5" height="1" fill="#008c3c"/><rect x="1414" y="121" width="1" height="3" fill="#008c3c"/><polyline points="63,166.4 125,166.6 140,166 155,165.2 165,164.6 172,163.5 180,162.2 195,161.3 215,160.6 240,160 300,159.6 330,159.4 345,160 360,161.6 375,162.4 400,162.4 470,162.1 540,161.8 613,161.6 636,160.2 667,158.5 702,156.7 715,155.6 720,154.3 743,153.9 755,152.6 770,150.7 791,148 810,147.5 845,147.2 860,145.6 868,144.5 886,144.8 900,143.6 912,142.7 957,143.2 975,141.6 992,140 1028,139.1 1040,138.8 1075,138.6 1109,137.9 1122,138.6 1136,140 1180,140.6 1216,140 1251,137.7 1287,135.2 1322,133.5 1340,132.8 1347,132.6 1358,130.6 1370,129 1395,125.8 1407,125.3 1414.5,123.2" fill="none" stroke="#1a7ad0" stroke-width="1.3" stroke-linejoin="round"/><rect x="173" y="154" width="542.3" height="11.8" fill="#ffff00" fill-opacity="0.5"/><rect x="177" y="81" width="1" height="104" fill="#000"/><rect x="63" y="185" width="1802" height="1" fill="#000"/><rect x="1797" y="81" width="1" height="104" fill="#000"/><path d="M94.5 186V188M132.5 186V188M169.5 186V188M207.5 186V188M244.5 186V188M282.5 186V188M319.5 186V188M357.5 186V188M394.5 186V188M432.5 186V188M469.5 186V188M507.5 186V188M544.5 186V188M582.5 186V188M619.5 186V188M657.5 186V188M694.5 186V188M732.5 186V188M769.5 186V188M807.5 186V188M844.5 186V188M882.5 186V188M919.5 186V188M957.5 186V188M994.5 186V188M1032.5 186V188M1069.5 186V188M1107.5 186V188M1144.5 186V188M1182.5 186V188M1219.5 186V188M1257.5 186V188M1294.5 186V188M1332.5 186V188M1369.5 186V188M1407.5 186V188M1444.5 186V188M1482.5 186V188M1519.5 186V188M1557.5 186V188M1594.5 186V188M1632.5 186V188M1669.5 186V188M1707.5 186V188M1744.5 186V188M1782.5 186V188M1819.5 186V188M1798 118.5H1800M1798 174.5H1800" stroke="#000" stroke-width="1" fill="none"/><path d="M1779 93.5H1785.5V185" stroke="#000" stroke-width="1" fill="none"/><clipPath id="cpa"><rect x="63" y="81" width="1734" height="103.5"/></clipPath><g clip-path="url(#cpa)"><text transform="translate(1780 189) rotate(-90)" font-size="15" fill="#222" font-family="Liberation Sans">50.0 pips</text></g><g font-size="15" fill="#222" font-family="Liberation Sans" text-anchor="middle"><text x="318.8" y="204.8">01:35</text><text x="393.8" y="204.8">02:25</text><text x="468.8" y="204.8">03:15</text><text x="543.8" y="204.8">04:05</text><text x="618.8" y="204.8">04:55</text><text x="693.8" y="204.8">05:45</text><text x="768.8" y="204.8">06:35</text><text x="843.8" y="204.8">07:25</text><text x="918.8" y="204.8">08:15</text><text x="993.8" y="204.8">09:05</text><text x="1068.8" y="204.8">09:55</text><text x="1143.8" y="204.8">10:45</text><text x="1218.8" y="204.8">11:35</text><text x="1293.8" y="204.8">12:25</text><text x="1368.8" y="204.8">13:15</text><text x="1443.8" y="204.8">14:05</text><text x="1518.8" y="204.8">14:55</text><text x="1593.8" y="204.8">15:45</text><text x="1668.8" y="204.8">16:35</text><text x="1743.8" y="204.8">17:25</text></g><text x="69" y="205.2" font-size="15" fill="#222" font-family="Liberation Sans">08 Feb 2026, UTC+0</text><text x="74" y="103" font-size="15" fill="#222" font-family="Liberation Sans">Exponential Moving Aver…</text><text x="1802.6" y="123.6" font-size="15" fill="#222" font-family="Liberation Sans" textLength="53.4" lengthAdjust="spacingAndGlyphs">1.19000</text><path d="M1790.2 96.8L1799 83.1H1861Q1864 83.1 1864 86.1V108.7Q1864 111.7 1861 111.7H1799Z" fill="#1ab32f"/><text x="1803.2" y="101.6" font-size="15" fill="#2a2a2a" font-family="Liberation Sans" textLength="59.2" lengthAdjust="spacingAndGlyphs">TARGET</text><rect x="874" y="88" width="86.8" height="25.8" rx="3.5" fill="#00914b" fill-opacity="0.8"/><rect x="966" y="88" width="87.8" height="25.8" rx="3.5" fill="#00914b" fill-opacity="0.8"/><rect x="874" y="120" width="83" height="5.9" rx="3" fill="#f05a23"/><rect x="963" y="120" width="90.6" height="6" rx="3" fill="#00913f"/><g font-family="Liberation Sans" font-weight="bold" fill="#fff"><text x="878.6" y="105.8" font-size="16">1.1894<tspan font-size="13">4</tspan></text><text x="991.2" y="105.8" font-size="16">1.1894<tspan font-size="13">8</tspan></text></g><g fill="#fff"><path id="arw" d="M949.2 95.6H956.4V102.8L954 100.4L949.6 104.8L947.2 102.4L951.6 98Z"/><use href="#arw" x="26"/></g><path d="M1382.5 172.5H1407.5L1413.5 164.8L1419.5 172.5H1432.7Q1435.7 172.5 1435.7 175.5V194Q1435.7 197 1432.7 197H1382.5Q1379.5 197 1379.5 194V175.5Q1379.5 172.5 1382.5 172.5Z" fill="#fff" stroke="#333" stroke-width="1"/><g fill="#222"><rect x="1386.4" y="177.7" width="1.8" height="1.8"/><rect x="1389.6" y="177.7" width="1.8" height="1.8"/><rect x="1386.4" y="180.9" width="1.8" height="1.8"/><rect x="1389.6" y="180.9" width="1.8" height="1.8"/><rect x="1386.4" y="184.1" width="1.8" height="1.8"/><rect x="1389.6" y="184.1" width="1.8" height="1.8"/><rect x="1386.4" y="187.29999999999998" width="1.8" height="1.8"/><rect x="1389.6" y="187.29999999999998" width="1.8" height="1.8"/><rect x="1386.4" y="190.5" width="1.8" height="1.8"/><rect x="1389.6" y="190.5" width="1.8" height="1.8"/></g><text x="1395.2" y="190" font-size="15" fill="#222" font-family="Liberation Sans">02:42</text></svg><svg class="abs" style="left:56px;top:214px" width="1815" height="21"><polygon points="8.4,11 16.4,7 16.4,15" fill="#777"/><polygon points="1808,10.8 1800,6.8 1800,14.8" fill="#888"/><rect x="1395" y="6.4" width="401" height="8.8" rx="4.4" fill="#848484"/></svg><svg class="abs" style="left:940px;top:235px" width="40" height="8"><path d="M4 2.4H11M4 5H11M30 2.4H37M30 5H37" stroke="#8a8a8a" stroke-width="1"/><polygon points="16.2,1.4 24.8,1.4 20.5,5.6" fill="#8a8a8a"/></svg><div class="abs" style="left:1878px;top:48px;width:34px;height:187px;background:#545454;border-radius:4px 0 0 0"></div><div class="abs" style="left:1884px;top:71px;width:24px;height:24px;background:#282828;border-radius:4px"></div><svg class="abs" style="left:1878px;top:48px" width="34" height="187"><rect x="5.20" y="6.2" width="1.8" height="1.8" fill="#999"/><rect x="7.95" y="6.2" width="1.8" height="1.8" fill="#999"/><rect x="10.70" y="6.2" width="1.8" height="1.8" fill="#999"/><rect x="13.45" y="6.2" width="1.8" height="1.8" fill="#999"/><rect x="16.20" y="6.2" width="1.8" height="1.8" fill="#999"/><rect x="18.95" y="6.2" width="1.8" height="1.8" fill="#999"/><rect x="21.70" y="6.2" width="1.8" height="1.8" fill="#999"/><rect x="24.45" y="6.2" width="1.8" height="1.8" fill="#999"/><rect x="27.20" y="6.2" width="1.8" height="1.8" fill="#999"/><rect x="5.20" y="9.6" width="1.8" height="1.8" fill="#999"/><rect x="7.95" y="9.6" width="1.8" height="1.8" fill="#999"/><rect x="10.70" y="9.6" width="1.8" height="1.8" fill="#999"/><rect x="13.45" y="9.6" width="1.8" height="1.8" fill="#999"/><rect x="16.20" y="9.6" width="1.8" height="1.8" fill="#999"/><rect x="18.95" y="9.6" width="1.8" height="1.8" fill="#999"/><rect x="21.70" y="9.6" width="1.8" height="1.8" fill="#999"/><rect x="24.45" y="9.6" width="1.8" height="1.8" fill="#999"/><rect x="27.20" y="9.6" width="1.8" height="1.8" fill="#999"/><path d="M14.8 28.6V39.8L17.5 37.3L19.5 41.6L21.2 40.8L19.2 36.6H22.9Z" fill="#fff"/><g stroke="#c4c4c4" stroke-width="1.6" fill="none"><path d="M17.8 59.9V65.4M17.8 68.2V73.9M10.9 66.8H16.4M19.2 66.8H24.9"/><path d="M16.6 95V106.1M18.9 89.8V103.4M12.8 96.9H26M9.8 99.1H23.4" stroke-width="1.3"/><path d="M17.8 122.2V127.2M10.9 129H15.9"/><rect x="17.8" y="128.8" width="6.6" height="6.2"/><path d="M9.4 161.8H26" stroke-width="1.9"/></g><path d="M6.2 145.7H30" stroke="#6e6e6e" stroke-width="1"/><polygon points="6.8,168 6.8,172 10.9,172" fill="#c4c4c4"/><path d="M10.6 183.4L15 187" stroke="#c4c4c4" stroke-width="1.8"/></svg><div class="tab" style="left:56px;width:106px;">Positions<span class="badge" style="left:79px">0</span></div><div class="tab" style="left:168px;width:89px;">Orders<span class="badge" style="left:62px">0</span></div><div class="tab" style="left:264px;width:63px;background:#545454;color:#fff;">History</div><div class="tab" style="left:333px;width:121px;">Price alerts<span class="badge" style="left:94px">0</span></div><div class="tab" style="left:460px;width:105px;">Transactions</div><div class="abs" style="left:56px;top:277px;width:1856px;height:594px;background:#545454;border-radius:0 0 0 4px"></div><div class="abs" style="left:63px;top:283px;width:162px;height:24px;background:#282828;border-radius:4px"></div><svg class="abs" style="left:204px;top:286px" width="17" height="17" viewBox="0 0 17 17"><circle cx="10.9" cy="6.5" r="5" fill="none" stroke="#ccc" stroke-width="1.8"/><path d="M7.4 10L2.4 14.6" stroke="#ccc" stroke-width="3" stroke-linecap="round"/></svg><div class="abs" style="left:231.3px;top:287px;color:#fff">Period:</div><div class="abs" style="left:289px;top:288px;width:14px;height:14px;border-radius:7px;background:#282828"></div><div class="abs" style="left:293px;top:292px;width:6px;height:6px;border-radius:3px;background:#ccc"></div><div class="abs" style="left:309px;top:283px;width:66px;height:24px;background:#282828;border-radius:4px;padding:3px 0 0 5px">Today</div><div class="abs" style="left:381px;top:288px;width:14px;height:14px;border-radius:7px;background:#282828"></div><div class="abs" style="left:401px;top:283px;width:106px;height:24px;background:#4a4a4a;border-radius:4px;padding:3px 0 0 6px;color:#8c8c8c">09/02/2026</div><div class="abs" style="left:536px;top:283px;width:106px;height:24px;background:#4a4a4a;border-radius:4px;padding:3px 0 0 6px;color:#8c8c8c">09/02/2026</div><div class="abs" style="left:513px;top:285.5px;color:#fff">—</div><svg class="abs" style="left:0;top:0" width="700" height="320"><polygon points="363.5,289.0 370.5,289.0 367,297.0" fill="#999"/><polygon points="495.5,289.0 502.5,289.0 499,297.0" fill="#8a8a8a"/><polygon points="629.5,289.0 636.5,289.0 633,297.0" fill="#8a8a8a"/></svg><div class="abs" style="left:1701px;top:283px;width:111px;height:23px;background:#00914b;border-radius:4px;text-align:center;padding-top:3px">Order History</div><div class="abs" style="left:1819px;top:283px;width:88px;height:23px;background:#00914b;border-radius:4px;text-align:center;padding-top:3px">Statement</div><div class="abs" style="left:63px;top:313px;width:1845px;height:515.5px;background:#282828;border-radius:4px;overflow:hidden"><div class="row" style="top:25px"><div class="ib">i</div><div class="c" style="left:39.19999999999999px;width:220px">EURUSD</div><div class="c" style="left:264.4px;width:220px">Sell</div><div class="c" style="left:489.5px;width:220px">09 Feb 2026 06:44:19.901</div><div class="c" style="left:714.7px;width:220px">1.18379</div><div class="c" style="left:939.8px;width:220px">1.18551</div><div class="c" style="left:1165px;width:220px">0.01 Lots</div><div class="c neg" style="left:1390.2px;width:220px">-2 456.93</div><div class="c" style="left:1607.3px;width:220px">37 517.16</div><div class="sep"></div></div><div class="row" style="top:55px"><div class="ib">i</div><div class="c" style="left:39.19999999999999px;width:220px">EURUSD</div><div class="c" style="left:264.4px;width:220px">Buy</div><div class="c" style="left:489.5px;width:220px">09 Feb 2026 07:06:07.783</div><div class="c" style="left:714.7px;width:220px">1.18550</div><div class="c" style="left:939.8px;width:220px">1.18486</div><div class="c" style="left:1165px;width:220px">0.01 Lots</div><div class="c neg" style="left:1390.2px;width:220px">-986.81</div><div class="c" style="left:1607.3px;width:220px">36 530.35</div><div class="sep"></div></div><div class="row" style="top:85px"><div class="ib">i</div><div class="c" style="left:39.19999999999999px;width:220px">EURUSD</div><div class="c" style="left:264.4px;width:220px">Buy</div><div class="c" style="left:489.5px;width:220px">09 Feb 2026 07:49:37.489</div><div class="c" style="left:714.7px;width:220px">1.18599</div><div class="c" style="left:939.8px;width:220px">1.18541</div><div class="c" style="left:1165px;width:220px">0.01 Lots</div><div class="c neg" style="left:1390.2px;width:220px">-904.90</div><div class="c" style="left:1607.3px;width:220px">35 625.45</div><div class="sep"></div></div><div class="row" style="top:115px"><div class="ib">i</div><div class="c" style="left:39.19999999999999px;width:220px">EURUSD</div><div class="c" style="left:264.4px;width:220px">Buy</div><div class="c" style="left:489.5px;width:220px">09 Feb 2026 07:53:56.126</div><div class="c" style="left:714.7px;width:220px">1.18587</div><div class="c" style="left:939.8px;width:220px">1.18501</div><div class="c" style="left:1165px;width:220px">0.01 Lots</div><div class="c neg" style="left:1390.2px;width:220px">-1 287.13</div><div class="c" style="left:1607.3px;width:220px">34 338.32</div><div class="sep"></div></div><div class="row" style="top:145px"><div class="ib">i</div><div class="c" style="left:39.19999999999999px;width:220px">EURUSD</div><div class="c" style="left:264.4px;width:220px">Buy</div><div class="c" style="left:489.5px;width:220px">09 Feb 2026 07:53:59.368</div><div class="c" style="left:714.7px;width:220px">1.18583</div><div class="c" style="left:939.8px;width:220px">1.18493</div><div class="c" style="left:1165px;width:220px">0.01 Lots</div><div class="c neg" style="left:1390.2px;width:220px">-1 341.73</div><div class="c" style="left:1607.3px;width:220px">32 996.59</div><div class="sep"></div></div><div class="row" style="top:175px"><div class="ib">i</div><div class="c" style="left:39.19999999999999px;width:220px">EURUSD</div><div class="c" style="left:264.4px;width:220px">Buy</div><div class="c" style="left:489.5px;width:220px">09 Feb 2026 08:13:09.366</div><div class="c" style="left:714.7px;width:220px">1.18580</div><div class="c" style="left:939.8px;width:220px">1.18590</div><div class="c" style="left:1165px;width:220px">0.01 Lots</div><div class="c pos" style="left:1390.2px;width:220px">23.38</div><div class="c" style="left:1607.3px;width:220px">33 019.97</div><div class="sep"></div></div><div class="row" style="top:205px"><div class="ib">i</div><div class="c" style="left:39.19999999999999px;width:220px">EURUSD</div><div class="c" style="left:264.4px;width:220px">Buy</div><div class="c" style="left:489.5px;width:220px">09 Feb 2026 08:13:10.530</div><div class="c" style="left:714.7px;width:220px">1.18581</div><div class="c" style="left:939.8px;width:220px">1.18590</div><div class="c" style="left:1165px;width:220px">0.01 Lots</div><div class="c pos" style="left:1390.2px;width:220px">9.73</div><div class="c" style="left:1607.3px;width:220px">33 029.70</div><div class="sep"></div></div><div class="row" style="top:235px"><div class="ib">i</div><div class="c" style="left:39.19999999999999px;width:220px">EURUSD</div><div class="c" style="left:264.4px;width:220px">Buy</div><div class="c" style="left:489.5px;width:220px">09 Feb 2026 08:13:13.085</div><div class="c" style="left:714.7px;width:220px">1.18608</div><div class="c" style="left:939.8px;width:220px">1.18587</div><div class="c" style="left:1165px;width:220px">0.01 Lots</div><div class="c neg" style="left:1390.2px;width:220px">-399.80</div><div class="c" style="left:1607.3px;width:220px">32 629.90</div><div class="sep"></div></div><div class="row" style="top:265px"><div class="ib">i</div><div class="c" style="left:39.19999999999999px;width:220px">EURUSD</div><div class="c" style="left:264.4px;width:220px">Buy</div><div class="c" style="left:489.5px;width:220px">09 Feb 2026 08:29:28.015</div><div class="c" style="left:714.7px;width:220px">1.18619</div><div class="c" style="left:939.8px;width:220px">1.18527</div><div class="c" style="left:1165px;width:220px">0.01 Lots</div><div class="c neg" style="left:1390.2px;width:220px">-1 367.37</div><div class="c" style="left:1607.3px;width:220px">31 262.53</div><div class="sep"></div></div><div class="row" style="top:295px"><div class="ib">i</div><div class="c" style="left:39.19999999999999px;width:220px">EURUSD</div><div class="c" style="left:264.4px;width:220px">Buy</div><div class="c" style="left:489.5px;width:220px">09 Feb 2026 08:29:29.324</div><div class="c" style="left:714.7px;width:220px">1.18633</div><div class="c" style="left:939.8px;width:220px">1.18526</div><div class="c" style="left:1165px;width:220px">0.01 Lots</div><div class="c neg" style="left:1390.2px;width:220px">-1 571.88</div><div class="c" style="left:1607.3px;width:220px">29 690.65</div><div class="sep"></div></div><div class="row" style="top:325px"><div class="ib">i</div><div class="c" style="left:39.19999999999999px;width:220px">EURUSD</div><div class="c" style="left:264.4px;width:220px">Buy</div><div class="c" style="left:489.5px;width:220px">09 Feb 2026 08:29:34.863</div><div class="c" style="left:714.7px;width:220px">1.18638</div><div class="c" style="left:939.8px;width:220px">1.18522</div><div class="c" style="left:1165px;width:220px">0.01 Lots</div><div class="c neg" style="left:1390.2px;width:220px">-1 694.59</div><div class="c" style="left:1607.3px;width:220px">27 996.06</div><div class="sep"></div></div><div class="row" style="top:355px"><div class="ib">i</div><div class="c" style="left:39.19999999999999px;width:220px">EURUSD</div><div class="c" style="left:264.4px;width:220px">Buy</div><div class="c" style="left:489.5px;width:220px">09 Feb 2026 08:40:50.778</div><div class="c" style="left:714.7px;width:220px">1.18638</div><div class="c" style="left:939.8px;width:220px">1.18524</div><div class="c" style="left:1165px;width:220px">0.01 Lots</div><div class="c neg" style="left:1390.2px;width:220px">-1 667.67</div><div class="c" style="left:1607.3px;width:220px">26 328.39</div><div class="sep"></div></div><div class="row" style="top:385px"><div class="ib">i</div><div class="c" style="left:39.19999999999999px;width:220px">EURUSD</div><div class="c" style="left:264.4px;width:220px">Buy</div><div class="c" style="left:489.5px;width:220px">09 Feb 2026 09:05:46.483</div><div class="c" style="left:714.7px;width:220px">1.18607</div><div class="c" style="left:939.8px;width:220px">1.18686</div><div class="c" style="left:1165px;width:220px">0.05 Lots</div><div class="c pos" style="left:1390.2px;width:220px">4 821.87</div><div class="c" style="left:1607.3px;width:220px">31 150.26</div><div class="sep"></div></div><div class="row" style="top:415px"><div class="ib">i</div><div class="c" style="left:39.19999999999999px;width:220px">EURUSD</div><div class="c" style="left:264.4px;width:220px">Buy</div><div class="c" style="left:489.5px;width:220px">09 Feb 2026 09:05:47.425</div><div class="c" style="left:714.7px;width:220px">1.18651</div><div class="c" style="left:939.8px;width:220px">1.18685</div><div class="c" style="left:1165px;width:220px">0.01 Lots</div><div class="c pos" style="left:1390.2px;width:220px">350.63</div><div class="c" style="left:1607.3px;width:220px">31 500.89</div><div class="sep"></div></div><div class="row" style="top:445px"><div class="ib">i</div><div class="c" style="left:39.19999999999999px;width:220px">EURUSD</div><div class="c" style="left:264.4px;width:220px">Buy</div><div class="c" style="left:489.5px;width:220px">09 Feb 2026 12:20:08.073</div><div class="c" style="left:714.7px;width:220px">1.18686</div><div class="c" style="left:939.8px;width:220px">1.18752</div><div class="c" style="left:1165px;width:220px">0.05 Lots</div><div class="c pos" style="left:1390.2px;width:220px">3 921.30</div><div class="c" style="left:1607.3px;width:220px">35 422.19</div></div><div class="abs" style="left:0;top:0;width:1823px;height:35px;background:#282828;box-shadow:0 3px 3px -2px rgba(0,0,0,.55)"><div class="th" style="left:39.19999999999999px;width:220px">Symbol</div><div class="th" style="left:264.4px;width:220px">Opening Direction</div><div class="th" style="left:489.5px;width:220px">Closing Time (UTC+0)</div><div class="th" style="left:714.7px;width:220px">Entry price</div><div class="th" style="left:939.8px;width:220px">Closing Price</div><div class="th" style="left:1165px;width:220px">Closing Quantity</div><div class="th" style="left:1390.2px;width:220px">Net NGN</div><div class="th" style="left:1607.3px;width:220px">Balance NGN</div><div class="hd" style="left:260px"></div><div class="hd" style="left:485px"></div><div class="hd" style="left:711px"></div><div class="hd" style="left:936px"></div><div class="hd" style="left:1161px"></div><div class="hd" style="left:1386px"></div><div class="hd" style="left:1612px"></div></div><svg class="abs" style="left:0;top:0" width="1845" height="515"><polygon points="1829.6000000000001,44.2 1838.2,44.2 1833.9,36.2" fill="#8a8a8a"/><polygon points="1829.6000000000001,466.0 1838.2,466.0 1833.9,473.6" fill="#777"/><rect x="1830" y="81" width="8" height="382" rx="4" fill="#888"/></svg><div class="abs" style="right:7px;top:490px;white-space:nowrap"><span style="letter-spacing:0.06px">Realised P&amp;L NGN:</span> <span class="neg" style="margin:0 1.5px 0 2px">-4 719.35</span> (USD: <span class="neg" style="margin-left:1.5px">-3.45</span>)</div></div><div class="abs" style="left:56px;top:838px;width:1856px;height:30px"><div class="st" style="left:13.0px">Balance: <b>NGN 0.19</b></div><div class="st" style="left:274.2px">Equity: <b>NGN 0.19</b></div><div class="sd" style="left:260.8px"></div><div class="st" style="left:535.4px">Margin: <b>NGN 0.00</b></div><div class="sd" style="left:522.0px"></div><div class="st" style="left:796.6px">Free margin: <b>NGN 0.19</b></div><div class="sd" style="left:783.2px"></div><div class="st" style="left:1057.8px">Margin level: <b>—</b></div><div class="sd" style="left:1044.4px"></div><div class="st" style="left:1319.0px">Smart Stop Out: <b>0.00%</b></div><div class="sd" style="left:1305.6px"></div><div class="st" style="left:1580.2px">Unr. net P&amp;L: <b>NGN 0.00</b></div><div class="sd" style="left:1566.8px"></div></div><svg class="abs" style="left:1886.9px;top:840.8px" width="18" height="18" viewBox="-9 -9 18 18"><path fill="#ddd" fill-rule="evenodd" d="M-1.73 -5.01L-0.93 -8.15L0.93 -8.15L1.73 -5.01L2.32 -4.76L5.10 -6.42L6.42 -5.10L4.76 -2.32L5.01 -1.73L8.15 -0.93L8.15 0.93L5.01 1.73L4.76 2.32L6.42 5.10L5.10 6.42L2.32 4.76L1.73 5.01L0.93 8.15L-0.93 8.15L-1.73 5.01L-2.32 4.76L-5.10 6.42L-6.42 5.10L-4.76 2.32L-5.01 1.73L-8.15 0.93L-8.15 -0.93L-5.01 -1.73L-4.76 -2.32L-6.42 -5.10L-5.10 -6.42L-2.32 -4.76ZM2.8 0A2.8 2.8 0 1 0 -2.8 0A2.8 2.8 0 1 0 2.8 0Z"/></svg><div class="abs" style="left:56px;top:886px;width:6px;height:6px;border-radius:3px;background:#0d8a12"></div><div class="abs" style="left:69px;top:881px;color:#ccc;white-space:nowrap">Trading sessions: Frankfurt, London, New York</div><div class="abs" style="left:1401px;top:881px;color:#ccc;white-space:nowrap">Current time:</div><div class="abs neg" style="left:1506px;top:880px;white-space:nowrap">UTC+0</div><svg class="abs" style="left:1500px;top:870px" width="100" height="31"><polygon points="63.0,13.0 70.0,13.0 66.5,21.0" fill="#999"/></svg><div class="abs neg" style="left:1581.4px;top:881px;white-space:nowrap">13:47 09.02.2026</div><div class="abs" style="left:1714px;top:880px;width:1px;height:18px;background:#444"></div><div class="abs" style="left:1727px;top:883px;font-size:11px;font-weight:bold;color:#fff">ON</div><div class="abs" style="left:1751px;top:881px;width:25px;height:16px;border-radius:3px;background:#555"></div><div class="abs" style="left:1788px;top:880px;width:1px;height:18px;background:#444"></div><div class="abs" style="left:1802px;top:881px;color:#ccc;white-space:nowrap">67 ms <span style="margin:0 2px">/</span> 67 ms</div></body></html>
